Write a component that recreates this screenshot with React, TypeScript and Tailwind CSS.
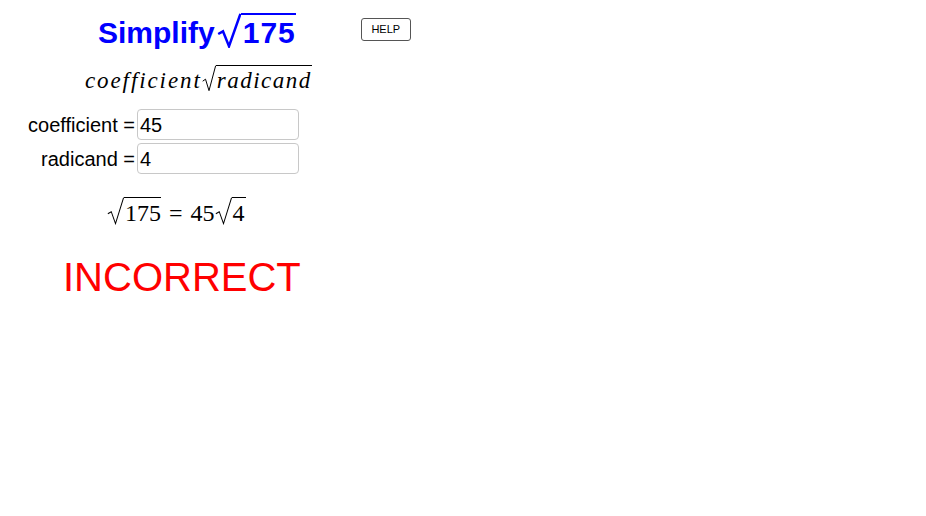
import type { ReactNode } from 'react'

function Radical({ children, stroke, thick, w, className }: { children: ReactNode; stroke: string; thick: number; w: number; className?: string }) {
  return (
    <span className={`relative inline-block ${className ?? ''}`} style={{ paddingLeft: w }}>
      <svg width={w} viewBox="0 0 20 40" preserveAspectRatio="none" className="absolute left-0 top-0 h-full">
        <path d="M1 24 L5 21 L10 38 L19.5 1" fill="none" stroke={stroke} strokeWidth={thick} vectorEffect="non-scaling-stroke" />
      </svg>
      <span className="inline-block pt-[3px]" style={{ borderTop: `${thick}px solid ${stroke}` }}>{children}</span>
    </span>
  )
}

export default function App() {
  return (
    <div className="w-[926px] h-[516px] bg-white text-black font-['Liberation_Sans',Arial,sans-serif]">
      <div className="flex items-start pt-[13px] pl-[98px]">
        <div className="text-[30px] leading-[30px] font-bold text-[#0000ff] whitespace-nowrap">
          <span>Simplify</span>
          <Radical stroke="#0000ff" thick={2.5} w={24} className="ml-[2px]">
            <span className="pl-[2px] tracking-[1px]">175</span>
          </Radical>
        </div>
        <button className="ml-[65px] mt-[5px] w-[50px] h-[23px] rounded-[3px] border border-[#555] bg-white text-[11px] leading-none text-black">
          HELP
        </button>
      </div>

      <div className="mt-[17px] pl-[85px] font-['Liberation_Serif',serif] italic text-[23px] leading-[23px] whitespace-nowrap">
        <span className="tracking-[1.9px]">coefficient</span>
        <Radical stroke="#000" thick={1} w={14}>
          <span className="tracking-[1.5px] pl-[1px]">radicand</span>
        </Radical>
      </div>

      <div className="mt-[17px] grid grid-cols-[137px_162px] gap-y-[3px] text-[20px]">
        <div className="flex items-center justify-end pr-[2px]">coefficient =</div>
        <div className="h-[31px] rounded-[4px] border border-[#c8c8c8] flex items-center pl-[2px]">45</div>
        <div className="flex items-center justify-end pr-[2px]">radicand =</div>
        <div className="h-[31px] rounded-[4px] border border-[#c8c8c8] flex items-center pl-[2px]">4</div>
      </div>

      <div className="mt-[23px] pl-[107px] font-['Liberation_Serif',serif] text-[24px] leading-[24px] whitespace-nowrap">
        <Radical stroke="#000" thick={1} w={17}>
          <span className="pl-[1px]">175</span>
        </Radical>
        <span className="px-[8px]">=</span>
        <span>45</span>
        <Radical stroke="#000" thick={1} w={17}>
          <span className="pl-[1px] pr-[1px]">4</span>
        </Radical>
      </div>

      <div className="mt-[32px] pl-[63px] text-[40px] leading-none text-[#ff0000]">INCORRECT</div>
    </div>
  )
}
